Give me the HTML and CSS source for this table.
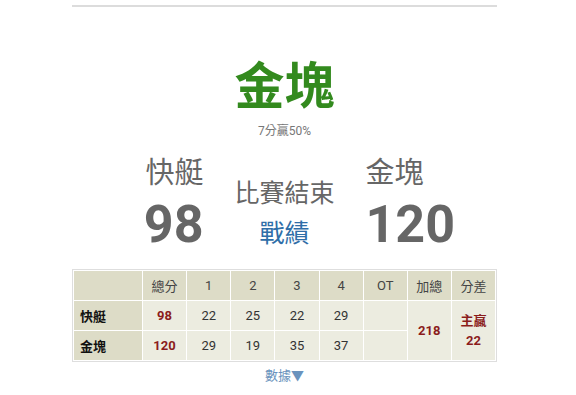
FILE: index.html
```html
<!DOCTYPE html>
<html lang="zh-Hant">
<head>
<meta charset="utf-8">
<link rel="stylesheet" href="styles.css">
</head>
<body>
<div class="page">
  <div class="rule"></div>
  <div class="winner">
    <div class="winner-name">金塊</div>
    <div class="winner-sub">7分贏50%</div>
  </div>
  <div class="score">
    <div class="team team-away">
      <div class="team-name">快艇</div>
      <div class="team-pts">98</div>
    </div>
    <div class="status">
      <div class="status-text">比賽結束</div>
      <div class="status-link">戰績</div>
    </div>
    <div class="team team-home">
      <div class="team-name">金塊</div>
      <div class="team-pts">120</div>
    </div>
  </div>
  <table class="box">
    <tr class="head">
      <th class="c-team"></th>
      <th>總分</th>
      <th>1</th>
      <th>2</th>
      <th>3</th>
      <th>4</th>
      <th>OT</th>
      <th>加總</th>
      <th>分差</th>
    </tr>
    <tr>
      <td class="c-team name">快艇</td>
      <td class="total">98</td>
      <td>22</td>
      <td>25</td>
      <td>22</td>
      <td>29</td>
      <td></td>
      <td class="total" rowspan="2">218</td>
      <td class="total" rowspan="2">主贏<br>22</td>
    </tr>
    <tr>
      <td class="c-team name">金塊</td>
      <td class="total">120</td>
      <td>29</td>
      <td>19</td>
      <td>35</td>
      <td>37</td>
      <td></td>
    </tr>
  </table>
  <div class="more">數據▼</div>
</div>
</body>
</html>
```

FILE: styles.css
```css
html, body {
  margin: 0;
  padding: 0;
  background: #fff;
}
body {
  font-family: Roboto, "Noto Sans CJK TC", sans-serif;
  color: #333;
}
.page {
  width: 425px;
  margin-left: 72px;
}
.rule {
  height: 2px;
  margin-top: 5px;
  background: #dcdcdc;
}
.winner {
  text-align: center;
  padding-top: 46px;
}
.winner-name {
  font-family: "Noto Sans CJK TC", sans-serif;
  font-size: 50px;
  font-weight: 700;
  line-height: 58px;
  color: #338a1e;
}
.winner-sub {
  font-size: 12px;
  line-height: 16px;
  color: #777;
  margin-top: 12px;
}
.score {
  display: flex;
  margin-top: 17px;
}
.team {
  flex: 1;
  color: #666;
}
.team-away {
  text-align: right;
}
.team-home {
  text-align: left;
}
.team-name {
  font-size: 29px;
  line-height: 34px;
}
.team-pts {
  font-size: 52px;
  font-weight: 700;
  line-height: 52px;
  margin-top: 9px;
}
.status {
  width: 162px;
  text-align: center;
  padding-top: 22px;
  font-size: 25px;
  line-height: 32px;
}
.status-text {
  color: #666;
}
.status-link {
  color: #2f6ea8;
  margin-top: 8px;
}
.box {
  margin-top: 18px;
  width: 425px;
  border: 1px solid #dedede;
  border-spacing: 1px;
  background: #fff;
  font-size: 13px;
  table-layout: fixed;
}
.box th,
.box td {
  height: 29px;
  padding: 0;
  text-align: center;
  color: #333;
  background: #ecece0;
}
.box th {
  font-weight: 400;
  color: #444;
  background: #dddcc7;
}
.box .c-team {
  width: 68px;
  background: #dddcc7;
}
.box .name {
  text-align: left;
  padding-left: 6px;
  font-weight: 700;
  color: #111;
}
.box .total {
  font-weight: 700;
  color: #8b1c1c;
  line-height: 20px;
}
.more {
  text-align: center;
  font-size: 13px;
  line-height: 16px;
  color: #6b93bd;
  margin-top: 6px;
}
```
